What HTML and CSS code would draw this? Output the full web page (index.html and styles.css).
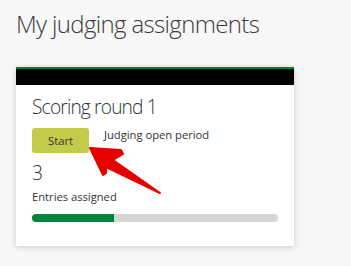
FILE: index.html
```html
<!DOCTYPE html>
<html lang="en">
<head>
  <meta charset="UTF-8">
  <title>My judging assignments</title>
  <link rel="stylesheet" href="styles.css">
</head>
<body>

  <div class="page">
    <h1>My judging assignments</h1>

    <!-- assignment card -->
    <div class="card">
      <div class="card-head"></div>
      <div class="card-body">
        <h2>Scoring round 1</h2>
        <div class="round-row">
          <button class="start-btn">Start</button>
          <span class="period">Judging open period</span>
        </div>
        <div class="count">3</div>
        <div class="count-label">Entries assigned</div>
        <div class="progress"><div class="progress-fill" style="width: 33.3%"></div></div>
      </div>
    </div>

    <!-- annotation arrow -->
    <svg class="arrow" width="351" height="266" viewBox="0 0 351 266">
      <polygon points="90,148 121,150 123,154 113,160 160,193 106,167 106,173 103,175"
        fill="#e60000" stroke="#e60000" stroke-width="2" stroke-linejoin="round"/>
    </svg>
  </div>

</body>
</html>
```

FILE: styles.css
```css
body {
  margin: 0;
  background-color: #f7f7f7;
  font-family: 'Open Sans', sans-serif;
  color: #333;
}

.page {
  position: relative;
  padding: 9px 16px;
}

h1 {
  margin: 0;
  font-size: 24px;
  line-height: 30px;
  font-weight: 300;
  letter-spacing: -0.65px;
  color: #3a3a3a;
}

.card {
  margin-top: 28px;
  width: 278px;
  background-color: #fff;
  border-top: 2px solid #00843d;
  box-shadow: 0 1px 6px rgba(0, 0, 0, 0.18);
}

.card-head {
  height: 16px;
  background-color: #000;
}

.card-body {
  padding: 10px 16px 24px;
}

.card-body h2 {
  margin: 0;
  font-size: 19.2px;
  line-height: 24px;
  font-weight: 300;
  letter-spacing: -0.85px;
}

.round-row {
  display: flex;
  align-items: flex-start;
  gap: 15px;
  margin-top: 9px;
}

.start-btn {
  width: 57px;
  height: 25px;
  padding: 0;
  border: none;
  border-radius: 3px;
  background-color: #c3cb4b;
  color: #333;
  font-family: inherit;
  font-size: 11.2px;
  line-height: 25px;
}

.period {
  font-size: 11.2px;
  line-height: 14px;
}

.count {
  margin-top: 8px;
  font-size: 19.2px;
  line-height: 24px;
  font-weight: 300;
}

.count-label {
  margin-top: 4px;
  font-size: 11.2px;
  line-height: 16px;
}

.progress {
  margin-top: 9px;
  height: 8px;
  border-radius: 4px;
  background-color: #d6d6d6;
  overflow: hidden;
}

.progress-fill {
  height: 100%;
  background-color: #00843d;
}

.arrow {
  position: absolute;
  left: 0;
  top: 0;
  pointer-events: none;
}
```
